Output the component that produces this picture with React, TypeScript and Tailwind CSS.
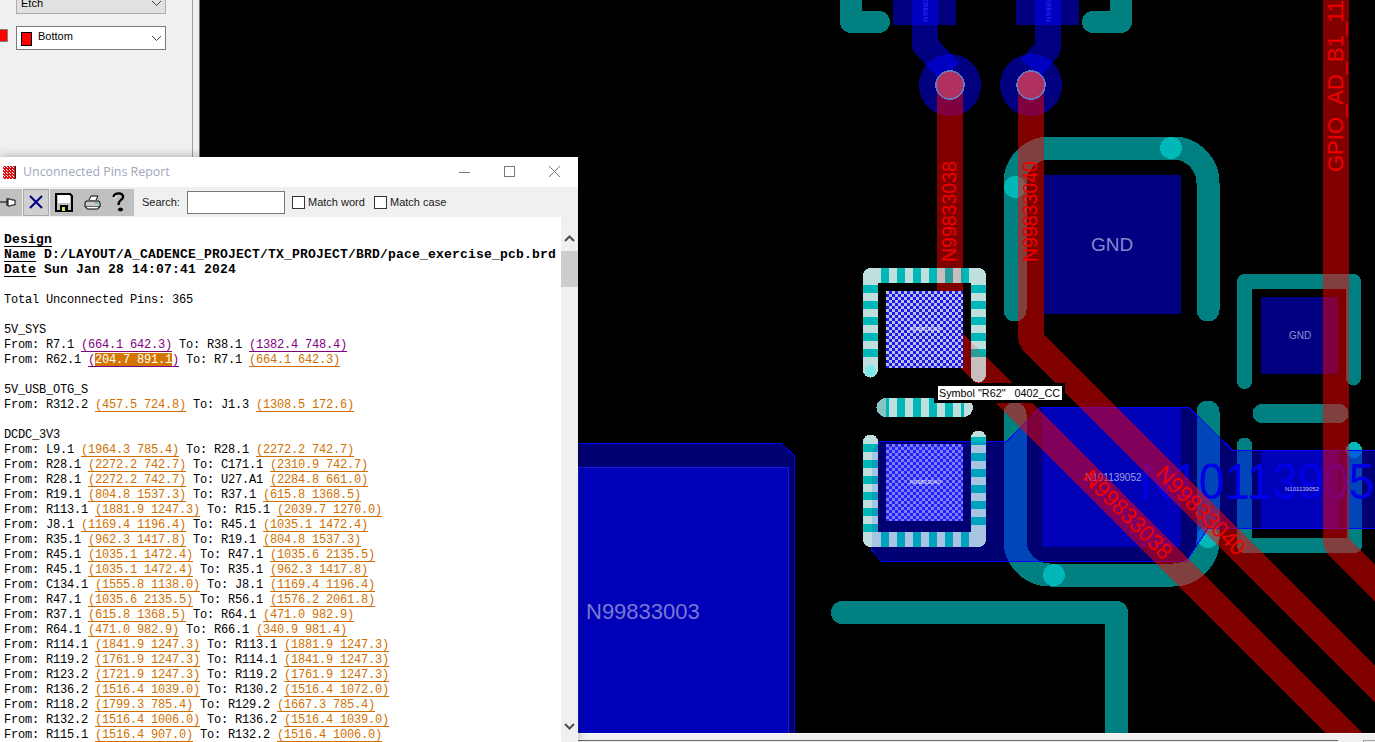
const links: [string, string, string, string][] = [
  ['L9.1', '(1964.3 785.4)', 'R28.1', '(2272.2 742.7)'],
  ['R28.1', '(2272.2 742.7)', 'C171.1', '(2310.9 742.7)'],
  ['R28.1', '(2272.2 742.7)', 'U27.A1', '(2284.8 661.0)'],
  ['R19.1', '(804.8 1537.3)', 'R37.1', '(615.8 1368.5)'],
  ['R113.1', '(1881.9 1247.3)', 'R15.1', '(2039.7 1270.0)'],
  ['J8.1', '(1169.4 1196.4)', 'R45.1', '(1035.1 1472.4)'],
  ['R35.1', '(962.3 1417.8)', 'R19.1', '(804.8 1537.3)'],
  ['R45.1', '(1035.1 1472.4)', 'R47.1', '(1035.6 2135.5)'],
  ['R45.1', '(1035.1 1472.4)', 'R35.1', '(962.3 1417.8)'],
  ['C134.1', '(1555.8 1138.0)', 'J8.1', '(1169.4 1196.4)'],
  ['R47.1', '(1035.6 2135.5)', 'R56.1', '(1576.2 2061.8)'],
  ['R37.1', '(615.8 1368.5)', 'R64.1', '(471.0 982.9)'],
  ['R64.1', '(471.0 982.9)', 'R66.1', '(340.9 981.4)'],
  ['R114.1', '(1841.9 1247.3)', 'R113.1', '(1881.9 1247.3)'],
  ['R119.2', '(1761.9 1247.3)', 'R114.1', '(1841.9 1247.3)'],
  ['R123.2', '(1721.9 1247.3)', 'R119.2', '(1761.9 1247.3)'],
  ['R136.2', '(1516.4 1039.0)', 'R130.2', '(1516.4 1072.0)'],
  ['R118.2', '(1799.3 785.4)', 'R129.2', '(1667.3 785.4)'],
  ['R132.2', '(1516.4 1006.0)', 'R136.2', '(1516.4 1039.0)'],
  ['R115.1', '(1516.4 907.0)', 'R132.2', '(1516.4 1006.0)'],
];

const orange = 'underline decoration-1 underline-offset-[3px] text-[#d07000]';
const purple = 'underline decoration-1 underline-offset-[3px] text-[#800080]';

function Row({ from, a, to, b, visited }: { from: string; a: string; to: string; b: string; visited?: boolean }) {
  return (
    <div className="h-[15px]">
      {`From: ${from} `}
      <span className={visited ? purple : orange}>{a}</span>
      {` To: ${to} `}
      <span className={visited ? purple : orange}>{b}</span>
    </div>
  );
}

function Chevron({ className }: { className: string }) {
  return (
    <svg width="11" height="7" viewBox="0 0 11 7" fill="none" className={className}>
      <polyline points="1,1 5.5,5.5 10,1" stroke="currentColor" strokeWidth="1" />
    </svg>
  );
}

// red and white speckle of the program icon
function TitleIcon() {
  const cells = [];
  for (let y = 0; y < 13; y++) {
    for (let x = 0; x < 13; x++) {
      const on = (x * 7 + y * 13 + x * y) % 3 !== 0;
      cells.push(<rect key={`${x}-${y}`} x={x} y={y} width="1" height="1" fill={on ? '#e01010' : '#ffffff'} />);
    }
  }
  return (
    <svg width="13" height="13" viewBox="0 0 13 13" shapeRendering="crispEdges" className="ml-[3px]">
      {cells}
      <path d="M12.5 0V13" stroke="#202020" />
    </svg>
  );
}

function Toolbar() {
  return (
    <div className="h-[30px] bg-[#f0f0f0] flex items-center text-[11px] text-[#202020] font-['Liberation_Sans',sans-serif]">
      <div className="w-[22px] h-[27px] bg-[#c0c0c0] flex items-center">
        <svg width="17" height="12" viewBox="0 0 17 12" fill="none" stroke="#000">
          <path d="M0 6H7" />
          <path d="M7 2V10M8 3H10L12 4H15V9H12L10 10H8Z" fill="#fff" />
        </svg>
      </div>
      <div className="ml-[1px] w-[26px] h-[27px] bg-[#d0d0d0] border border-[#a8a8a8] flex items-center justify-center">
        <svg width="14" height="14" viewBox="0 0 14 14" stroke="#000080" strokeWidth="2" fill="none">
          <path d="M1 1L13 13M13 1L1 13" />
        </svg>
      </div>
      <div className="ml-[1px] w-[84px] h-[27px] bg-[#c0c0c0] flex items-center pl-[5px] gap-[11px]">
        <svg width="18" height="19" viewBox="0 0 18 19" shapeRendering="crispEdges">
          <path d="M1 1H15L17 3V18H1Z" fill="#c0c0c0" stroke="#000" strokeWidth="1.5" />
          <rect x="3" y="2" width="12" height="8" fill="#fff" />
          <rect x="5" y="12" width="8" height="6" fill="#000" />
          <rect x="7" y="14" width="3" height="4" fill="#f0e060" />
        </svg>
        <svg width="17" height="15" viewBox="0 0 17 15" fill="none" stroke="#000">
          <path d="M5 5L7 1H14L12 5" fill="#fff" />
          <path d="M2 6H15L16 8V12H1V8Z" fill="#c8c8c8" />
          <path d="M2 12L3 14H14L15 12" fill="#fff" />
          <path d="M11 8H14" stroke="#00b0c0" />
        </svg>
        <svg width="13" height="20" viewBox="0 0 13 20" fill="none" stroke="#000">
          <path d="M1.5 5C2 2 5 1 8 1.5C11 2 12 5 10 7C8.5 8.5 6.5 9 6.5 13" strokeWidth="2.4" />
          <path d="M2 5.5L5 4" stroke="#fff" />
          <ellipse cx="8.5" cy="17.5" rx="2.2" ry="1.4" fill="#000" />
        </svg>
      </div>
      <span className="ml-[8px] w-[37px]">Search:</span>
      <div className="ml-[8px] w-[98px] h-[23px] bg-white border border-[#7a7a7a]" />
      <div className="ml-[7px] w-[13px] h-[13px] bg-white border border-[#333] mt-[1px]" />
      <span className="ml-[3px] mt-[1px] w-[57px]">Match word</span>
      <div className="ml-[9px] w-[13px] h-[13px] bg-white border border-[#333] mt-[1px]" />
      <span className="ml-[3px] mt-[1px]">Match case</span>
    </div>
  );
}

function ReportWindow() {
  return (
    <div className="absolute left-0 top-[157px] w-[578px] h-[585px] bg-white flex flex-col shadow-[0_0_10px_rgba(0,0,0,0.3)]">
      <div className="h-[30px] shrink-0 flex items-center">
        <TitleIcon />
        <span className="ml-[7px] text-[12.4px] text-[#9fa8bb] font-['Open_Sans',sans-serif]">Unconnected Pins Report</span>
        <svg width="112" height="14" viewBox="0 0 112 14" fill="none" stroke="#777" className="ml-auto mr-[7px]" shapeRendering="crispEdges">
          <path d="M0 7.5H11" />
          <rect x="45.5" y="1.5" width="10" height="10" />
          <path d="M90 1L101 12M101 1L90 12" shapeRendering="auto" />
        </svg>
      </div>
      <Toolbar />
      <div className="flex-1 flex min-h-0">
        <div className="w-[561px] pt-[16px] pl-[4px] overflow-hidden whitespace-pre text-[12px] tracking-[-0.2px] leading-[15px] text-black font-['Liberation_Mono',monospace]">
          <div className="h-[15px] text-[13px] tracking-[0.2px] leading-[13px] font-bold underline underline-offset-[3px]">Design</div>
          <div className="h-[15px] text-[13px] tracking-[0.2px] leading-[13px] font-bold">
            <span className="underline underline-offset-[3px]">Name</span> D:/LAYOUT/A_CADENCE_PROJECT/TX_PROJECT/BRD/pace_exercise_pcb.brd
          </div>
          <div className="h-[15px] text-[13px] tracking-[0.2px] leading-[13px] font-bold">
            <span className="underline underline-offset-[3px]">Date</span> Sun Jan 28 14:07:41 2024
          </div>
          <div className="h-[15px]" />
          <div className="h-[15px]">Total Unconnected Pins: 365</div>
          <div className="h-[15px]" />
          <div className="h-[15px]">5V_SYS</div>
          <Row from="R7.1" a="(664.1 642.3)" to="R38.1" b="(1382.4 748.4)" visited />
          <div className="h-[15px]">
            {'From: R62.1 '}
            <span className={purple}>
              (<span className="bg-[#d27600] text-white">204.7 891.1</span>)
            </span>
            {' To: R7.1 '}
            <span className={orange}>(664.1 642.3)</span>
          </div>
          <div className="h-[15px]" />
          <div className="h-[15px]">5V_USB_OTG_S</div>
          <Row from="R312.2" a="(457.5 724.8)" to="J1.3" b="(1308.5 172.6)" />
          <div className="h-[15px]" />
          <div className="h-[15px]">DCDC_3V3</div>
          {links.map((l, i) => (
            <Row key={i} from={l[0]} a={l[1]} to={l[2]} b={l[3]} />
          ))}
        </div>
        {/* Scrollbar */}
        <div className="w-[17px] bg-[#f0f0f0] flex flex-col items-center text-[#505050]">
          <svg width="11" height="7" viewBox="0 0 11 7" fill="none" className="mt-[18px]">
            <polyline points="1,6 5.5,1.5 10,6" stroke="currentColor" strokeWidth="2" />
          </svg>
          <div className="mt-[9px] w-full h-[36px] bg-[#cdcdcd]" />
          <svg width="11" height="7" viewBox="0 0 11 7" fill="none" className="mt-auto mb-[12px]">
            <polyline points="1,1 5.5,5.5 10,1" stroke="currentColor" strokeWidth="2" />
          </svg>
        </div>
      </div>
    </div>
  );
}

function LeftPanel() {
  return (
    <div className="w-[200px] shrink-0 bg-[#f0f0f0] border-r border-[#6e6e6e] overflow-hidden">
      <div className="w-[193px] h-full border-r border-[#a0a0a0] text-[11px] text-black font-['Liberation_Sans',sans-serif]">
        <div className="-mt-[10px] ml-[16px] w-[150px] h-[24px] bg-[#e1e1e1] border border-[#adadad] flex items-center pl-[4px] pt-[3px]">
          Etch
          <Chevron className="ml-auto mr-[3px] text-[#404040]" />
        </div>
        <div className="mt-[12px] flex items-start">
          <div className="mt-[3px] w-[8px] h-[13px] bg-[#ff0000] border border-[#808080] border-l-0" />
          <div className="ml-[8px] w-[150px] h-[24px] bg-white border border-[#7a7a7a] flex items-center pl-[4px]">
            <div className="w-[11px] h-[14px] bg-[#ff0000] border border-black mt-[1px]" />
            <span className="ml-[6px] -mt-[4px]">Bottom</span>
            <Chevron className="ml-auto mr-[3px] text-[#404040]" />
          </div>
        </div>
      </div>
    </div>
  );
}

function Stripes({ d, lines, width = 15 }: { d: string; lines: string[]; width?: number }) {
  return (
    <g fill="none">
      <path d={d} stroke="#c0e0e0" strokeWidth={width} strokeLinecap="round" strokeLinejoin="round" />
      {lines.map((l) => (
        <path key={l} d={l} stroke="#00b8b8" strokeWidth={width} strokeDasharray="8 8" />
      ))}
    </g>
  );
}

const POLY = 'M880,441.5 H1007 L1040,407.5 H1189 L1233,450.5 H1376 V528.5 H1208 L1186,561.5 H882 L871.5,550 V450 Z';

function Board() {
  const redTraces = (
    <>
      <path d="M950,85 V339 L1400,789" />
      <path d="M1031,85 V340 L1400,709" />
      <path d="M1336,-5 V544 L1400,608" />
    </>
  );
  return (
    <svg width="1175" height="733" viewBox="200 0 1175 733" className="block bg-black font-['Liberation_Sans',sans-serif]" shapeRendering="crispEdges">
      <defs>
        <pattern id="hatchTop" x="886" y="291" width="6" height="6" patternUnits="userSpaceOnUse">
          <rect width="6" height="6" fill="#1818f0" />
          <rect width="3" height="3" fill="#c0c0dc" />
          <rect x="3" y="3" width="3" height="3" fill="#c0c0dc" />
        </pattern>
        <pattern id="hatchLow" x="886" y="444" width="6" height="6" patternUnits="userSpaceOnUse">
          <rect width="6" height="6" fill="#2020ff" />
          <rect width="3" height="3" fill="#8080f0" />
          <rect x="3" y="3" width="3" height="3" fill="#8080f0" />
        </pattern>
        <clipPath id="topEdge">
          <rect x="863" y="268" width="123" height="15" />
          <rect x="971" y="268" width="15" height="115" />
        </clipPath>
        <clipPath id="lowEdge">
          <rect x="863" y="431" width="15" height="116" />
          <rect x="971" y="431" width="15" height="116" />
          <rect x="863" y="532" width="123" height="15" />
        </clipPath>
      </defs>

      {/* Bottom layer pads */}
      <g fill="#000080">
        <rect x="1044" y="175" width="137" height="139" />
        <rect x="1261" y="297" width="77" height="77" />
        <rect x="1042" y="407" width="139" height="140" />
        <rect x="1261" y="451" width="77" height="77" />
        <rect x="578" y="467" width="210" height="270" stroke="#3030c8" />
      </g>

      {/* Top connector, vias and blue routing */}
      <g fill="#0000ff" fillOpacity="0.5">
        <rect x="893" y="0" width="63" height="25" />
        <rect x="1016" y="0" width="63" height="25" />
        <circle cx="950" cy="85" r="31" />
        <circle cx="1031" cy="85" r="31" />
      </g>
      <g fill="none" stroke="#0000ff" strokeOpacity="0.5" strokeWidth="26" strokeLinejoin="round">
        <path d="M925,-5 V45 L950,72" />
        <path d="M1048,-5 V48 L1031,68" />
      </g>

      {/* Teal shapes */}
      <g fill="none" stroke="#008080" strokeLinecap="round" strokeLinejoin="round">
        <path d="M851,-15 V22 H879" strokeWidth="22" />
        <path d="M1121,-15 V22 H1093" strokeWidth="22" />
        <path d="M1015,310 V183 A35,35 0 0 1 1050,148 H1173 A35,35 0 0 1 1208,183 V310" strokeWidth="23" />
        <path d="M1015,414 V540 A35,35 0 0 0 1050,575 H1173 A35,35 0 0 0 1208,540 V412" strokeWidth="23" />
        <path d="M1244.5,381.5 V281.5 H1353.5 V378" strokeWidth="15" />
        <path d="M1262,413.5 H1339" strokeWidth="19" />
        <path d="M1244.5,445 V545.5 H1354.5 V450" strokeWidth="15" />
        <path d="M842.5,612.5 H1116.5 V760" strokeWidth="23" />
      </g>
      <g fill="#00b8b8">
        <circle cx="1171" cy="148" r="11" />
        <circle cx="1015" cy="187" r="11" />
        <circle cx="1054" cy="575" r="11" />
        <circle cx="1208" cy="537" r="11" />
        <circle cx="1354" cy="450" r="8" />
      </g>

      {/* Copper outlines over the pads */}
      <path d={POLY} fill="#0000ff" fillOpacity="0.45" stroke="#0000ff" />
      <path d="M570,443.5 H781 L794,455 V740 H570 Z" fill="#0000ff" fillOpacity="0.45" stroke="#0000ff" />

      {/* Net names on the blue shapes */}
      <text transform="translate(1140,499) scale(1,1.1)" fontSize="46" fill="#0000e6">N101139052</text>
      <text x="1085" y="481" fontSize="10" fill="#a0a0e0">N101139052</text>
      <text x="1285" y="491" fontSize="6" fill="#c0c0f0">N101139052</text>
      <text x="586" y="619" fontSize="22" fill="#7878d0">N99833003</text>
      <text x="1112" y="251" fontSize="19" fill="#8888cc" textAnchor="middle">GND</text>
      <text x="1300" y="339" fontSize="10" fill="#9090d0" textAnchor="middle">GND</text>
      <text transform="translate(928,22) rotate(-90)" fontSize="8" fill="#3030ff">N99833038</text>
      <text transform="translate(1051,22) rotate(-90)" fontSize="8" fill="#3030ff">N99833040</text>

      {/* Red routing */}
      <g fill="none" stroke="#ff0000" strokeOpacity="0.5" strokeWidth="26" strokeLinejoin="bevel">{redTraces}</g>
      <g fill="#f00000">
        <text transform="translate(956,262) rotate(-90)" fontSize="19.5">N99833038</text>
        <text transform="translate(1037,262) rotate(-90)" fontSize="19.5">N99833040</text>
        <text transform="translate(1343,172) rotate(-90)" fontSize="22">GPIO_AD_B1_11</text>
        <text transform="translate(1122,520) rotate(45)" fontSize="22.5" textAnchor="middle">N99833038</text>
        <text transform="translate(1195.5,516) rotate(45)" fontSize="22.5" textAnchor="middle">N99833040</text>
      </g>

      {/* Selected R62 symbol and its neighbour */}
      <Stripes
        d="M870.5,370 V275.5 H978.5 V375"
        lines={['M870.5,285 V357', 'M978.5,285 V365', 'M881,275.5 H969']}
      />
      <g clipPath="url(#topEdge)" fill="none" stroke="#ff0000" strokeOpacity="0.15" strokeWidth="26">{redTraces}</g>
      <circle cx="870.5" cy="371" r="6" fill="#80e8e8" />
      <rect x="886" y="291" width="77" height="77" fill="url(#hatchTop)" />
      <text x="925" y="331" fontSize="6" fill="#e8e8f8" textAnchor="middle">N99833038</text>

      <Stripes d="M886.5,407.5 H963.5" width={19} lines={['M886,407.5 H889', 'M897,407.5 H964']} />
      <path d="M886,398 A9.5,9.5 0 0 0 886,417 Z" fill="#88c4c4" />

      <Stripes
        d="M870.5,442 V539.5 H978.5 V438"
        lines={['M870.5,444 V532', 'M978.5,437 V533', 'M881,539.5 H969']}
      />
      <path d={POLY} clipPath="url(#lowEdge)" fill="#0000ff" fillOpacity="0.12" />
      <rect x="886" y="444" width="77" height="77" fill="url(#hatchLow)" />
      <text x="925" y="484" fontSize="6" fill="#e8e8f8" textAnchor="middle">N99833040</text>

      {/* Via drills */}
      <g fill="#b03060" stroke="#6878c0" strokeWidth="1.5">
        <circle cx="950" cy="85" r="14" />
        <circle cx="1031" cy="85" r="14" />
      </g>
    </svg>
  );
}

export default function App() {
  return (
    <div className="relative w-[1375px] h-[742px] overflow-hidden flex bg-black">
      <LeftPanel />
      <div className="flex-1 flex flex-col">
        <Board />
        {/* Horizontal scroll strip under the canvas */}
        <div className="h-[9px] bg-[#f0f0f0] border-t border-white flex items-end">
          <div className="w-[1138px] h-[2px] border-t border-[#686868]" />
          <div className="ml-[25px] flex-1 h-[2px] border-t border-l border-[#a0a0a0]" />
        </div>
      </div>
      <ReportWindow />
      {/* Symbol tooltip */}
      <div className="absolute left-[934px] top-[383px] w-[131px] h-[20px] border-[3px] border-l-[4px] border-black bg-white pl-[1px] flex items-center whitespace-pre text-[10.8px] leading-none text-black font-['Liberation_Sans',sans-serif]">
        Symbol "R62"   0402_CC
      </div>
    </div>
  );
}
